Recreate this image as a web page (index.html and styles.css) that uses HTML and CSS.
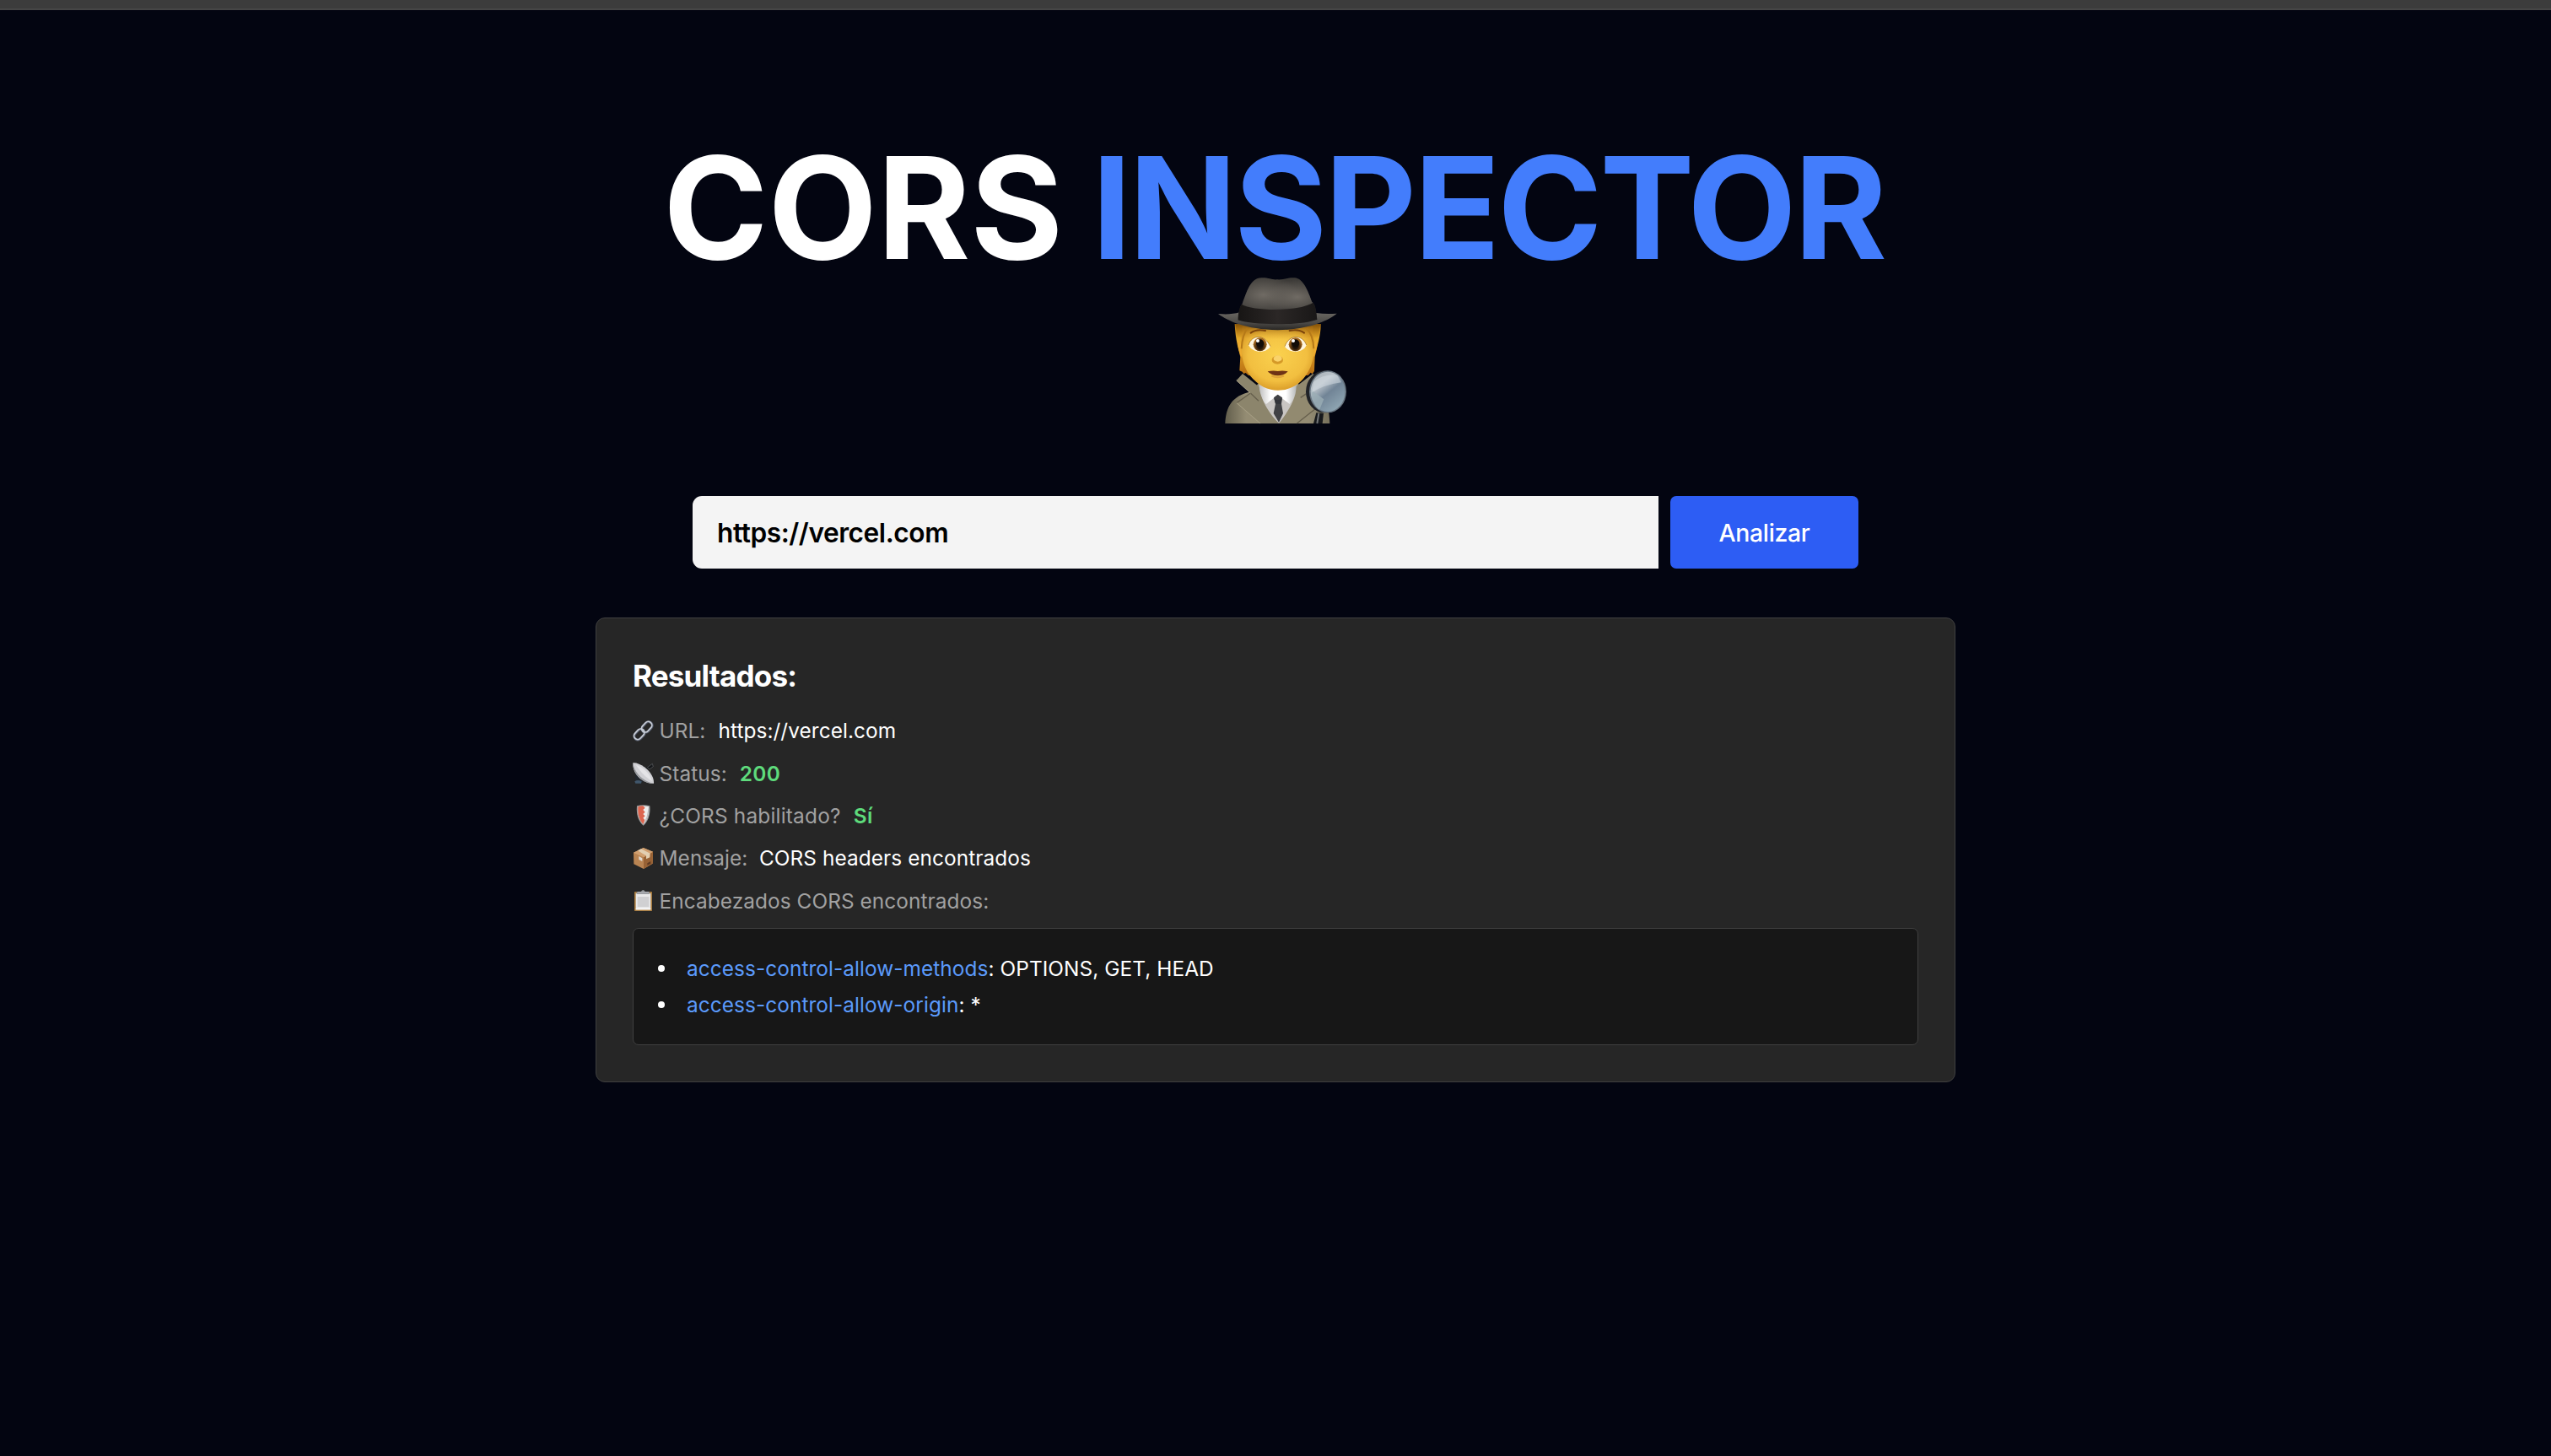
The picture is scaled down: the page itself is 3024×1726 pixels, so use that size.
FILE: index.html
```html
<!DOCTYPE html>
<html lang="es">
<head>
<meta charset="utf-8">
<title>CORS Inspector</title>
<link rel="stylesheet" href="styles.css">
</head>
<body>
<div class="topbar"></div>
<main class="page">
  <h1 class="title">
    <span class="title-text">CORS <span class="accent">INSPECTOR</span></span>
    <svg class="detective" viewBox="6 66 540 519" aria-hidden="true">
      <defs>
        <radialGradient id="crownL" cx=".32" cy=".4" r=".45"><stop offset="0" stop-color="#706b64"/><stop offset="1" stop-color="#706b64" stop-opacity="0"/></radialGradient>
        <radialGradient id="crownR" cx=".75" cy=".45" r=".4"><stop offset="0" stop-color="#706b64"/><stop offset="1" stop-color="#706b64" stop-opacity="0"/></radialGradient>
        <linearGradient id="brim" x2="0" y2="1"><stop offset="0" stop-color="#6a6762"/><stop offset=".6" stop-color="#4b4946"/><stop offset="1" stop-color="#282624"/></linearGradient>
        <linearGradient id="band" x2="1" y2="0"><stop offset="0" stop-color="#171514"/><stop offset=".5" stop-color="#2b2726"/><stop offset="1" stop-color="#191717"/></linearGradient>
        <radialGradient id="skin" cx=".5" cy=".45" r=".62"><stop offset="0" stop-color="#fad14e"/><stop offset=".65" stop-color="#f2bf40"/><stop offset="1" stop-color="#d18f1e"/></radialGradient>
        <linearGradient id="hair" x2="0" y2="1"><stop offset="0" stop-color="#b0720e"/><stop offset=".3" stop-color="#e7ad2c"/><stop offset="1" stop-color="#b86e12"/></linearGradient>
        <linearGradient id="shade" x2="0" y2="1"><stop offset="0" stop-color="#7c4b06" stop-opacity=".85"/><stop offset="1" stop-color="#c98a1c" stop-opacity="0"/></linearGradient>
        <linearGradient id="coat" x2="1" y2="0"><stop offset="0" stop-color="#625e4c"/><stop offset=".2" stop-color="#948c73"/><stop offset=".8" stop-color="#948c73"/><stop offset="1" stop-color="#77715c"/></linearGradient>
        <linearGradient id="shirt" x2="1" y2="0"><stop offset="0" stop-color="#bdbdbd"/><stop offset=".3" stop-color="#fff"/><stop offset=".7" stop-color="#fff"/><stop offset="1" stop-color="#aeb0b0"/></linearGradient>
        <linearGradient id="lens" x2=".7" y2="1"><stop offset="0" stop-color="#a5adb3"/><stop offset=".35" stop-color="#bac3ca"/><stop offset=".6" stop-color="#718496"/><stop offset="1" stop-color="#8fa6b3"/></linearGradient>
        <radialGradient id="iris" cy=".65"><stop offset=".35" stop-color="#21140a"/><stop offset="1" stop-color="#a2651c"/></radialGradient>
      </defs>
      <path d="M131 222C132 250 136 276 141 300L151 340 148 388 158 392 163 399 170 396 180 405 392 405 401 395 407 400 414 390 416 340C424 300 438 262 437 222Z" fill="url(#hair)"/>
      <path d="M97 576C100 520 118 478 190 463L218 430 355 430 372 463 440 475C462 500 468 540 469 576Z" fill="url(#coat)"/>
      <path d="M222 455L284 492 350 450 345 520 288 576 236 525Z" fill="#c9c6c3"/>
      <path d="M217 432L217 455C224 482 234 500 243 507L284 474 326 507C342 490 352 462 354 430Z" fill="url(#shirt)"/>
      <path d="M270 484L284 473 300 484 297 506 303 540 288 572 269 540 276 506Z" fill="#404144"/>
      <path d="M271 486Q284 500 299 486L296 506 276 506Z" fill="#33353a"/>
      <path d="M159 399L218 446C222 492 260 548 288 575L222 576 138 503 187 468 137 423Z" fill="#8c856c"/>
      <path d="M187 468L216 496M138 503L187 468" fill="none" stroke="#665f4c" stroke-width="4"/>
      <path d="M410 398L350 444C350 494 310 548 288 575L350 576 440 506 386 470 420 425Z" fill="#928a70"/>
      <path d="M386 470L365 484M440 506L352 576" fill="none" stroke="#665f4c" stroke-width="4"/>
      <path d="M138 503L222 576M137 423L187 468" fill="none" stroke="#aaa287" stroke-width="3"/>
      <path d="M158 230C150 300 152 362 184 404C216 443 250 458 285 458C330 458 366 436 390 396C418 350 415 300 409 230Z" fill="url(#skin)"/>
      <path d="M141 282Q150 275 154 300L157 343Q142 320 141 282M426 282Q416 275 413 300L410 343Q423 320 426 282" fill="#edac30"/>
      <path d="M133 222H436L428 268Q284 286 140 268Z" fill="url(#shade)"/>
      <path d="M176 238Q158 260 155 310M386 238Q410 260 412 310" fill="none" stroke="#b57918" stroke-width="6"/>
      <path d="M188 254Q208 239 240 246M326 246Q358 239 378 254" fill="none" stroke="#7b430b" stroke-width="6" stroke-linecap="round"/>
      <path d="M180 297C192 258 238 258 258 302C240 329 194 326 180 297M309 302C324 258 372 258 386 297C376 326 326 329 309 302" fill="#fff6df"/>
      <circle cx="221" cy="295" r="24" fill="url(#iris)"/><circle cx="347" cy="295" r="24" fill="url(#iris)"/>
      <circle cx="221" cy="291" r="14" fill="#120c08"/><circle cx="347" cy="291" r="14" fill="#120c08"/>
      <circle cx="213" cy="282" r="6" fill="#fff"/><circle cx="339" cy="282" r="6" fill="#fff"/>
      <path d="M180 297C192 258 238 258 258 302M309 302C324 258 372 258 386 297" fill="none" stroke="#9a6514" stroke-width="2"/>
      <ellipse cx="283" cy="350" rx="20" ry="15" fill="#d59927"/><ellipse cx="284" cy="345" rx="15" ry="11" fill="#fad36b"/>
      <path d="M248 391Q268 386 284 390Q302 386 320 391Q306 406 284 406Q262 406 248 391Z" fill="#6f3315"/>
      <path d="M262 407Q284 417 306 407" fill="none" stroke="#dfa23a" stroke-width="6"/>
      <path d="M72 186C96 188 126 188 148 181L420 183C446 187 470 187 494 185C462 210 400 241 284 244C168 241 108 212 72 186Z" fill="url(#brim)"/>
      <path d="M143 210C145 184 148 164 158 150C174 110 186 58 226 58C252 57 264 66 282 64C302 66 316 57 344 58C376 60 392 108 406 144C416 150 420 176 424 208Z" fill="#3d3b38"/>
      <path d="M143 210C145 184 148 164 158 150C174 110 186 58 226 58C252 57 264 66 282 64C302 66 316 57 344 58C376 60 392 108 406 144C416 150 420 176 424 208Z" fill="url(#crownL)"/>
      <path d="M143 210C145 184 148 164 158 150C174 110 186 58 226 58C252 57 264 66 282 64C302 66 316 57 344 58C376 60 392 108 406 144C416 150 420 176 424 208Z" fill="url(#crownR)"/>
      <path d="M143 208C143 184 147 164 155 152C200 178 360 178 410 146C419 156 422 182 424 206C370 228 200 228 143 208Z" fill="url(#band)"/>
      <path d="M421 538L447 540 443 576 411 576Z" fill="#17191c"/><path d="M430 540L424 576" stroke="#737679" stroke-width="6"/>
      <ellipse cx="450" cy="463" rx="66" ry="75" fill="#202226"/>
      <ellipse cx="462" cy="463" rx="66" ry="75" fill="#687580"/>
      <ellipse cx="462" cy="463" rx="61" ry="71" fill="url(#lens)"/>
      <path d="M403 456L448 490 432 528Q402 505 403 456" fill="#9baeb5" opacity=".8"/>
      <path d="M412 428Q442 400 495 404L510 430Q450 438 405 466Z" fill="#d8dfe5" opacity=".5"/>
    </svg>
  </h1>
  <form class="search">
    <div class="field">https://vercel.com</div>
    <button class="submit" type="button">Analizar</button>
  </form>
  <section class="card">
    <h2 class="card-title">Resultados:</h2>
    <div class="row">
      <svg class="icon" viewBox="0 0 75 75"><g fill="none"><g stroke="#596070" stroke-width="9"><rect x="-13" y="-21" width="26" height="42" rx="13" transform="translate(51 24) rotate(43)"/><rect x="-13" y="-21" width="26" height="42" rx="13" transform="translate(24 50) rotate(43)"/></g><g stroke="#c7ccd5" stroke-width="5"><rect x="-13" y="-21" width="26" height="42" rx="13" transform="translate(50 23) rotate(43)"/><rect x="-13" y="-21" width="26" height="42" rx="13" transform="translate(23 49) rotate(43)"/></g></g></svg>
      <span class="label">URL:</span><span class="value">https://vercel.com</span>
    </div>
    <div class="row">
      <svg class="icon" viewBox="0 0 75 75"><path d="M11 34L8 64 32 72 45 60 30 40Z" fill="#22272d"/><path d="M7 67Q18 59 32 67L30 74H10Z" fill="#40566b"/><path d="M46 23L64 10" stroke="#15171a" stroke-width="5"/><path d="M52 17L70 4 73 14 60 24Z" fill="#15171a" stroke="#63666a" stroke-width="2"/><path d="M1 1C28 -2 78 36 75 74C44 78 -2 46 1 1Z" fill="#d0d0d4"/><path d="M1 1C6 38 40 68 75 74C44 78 -1 46 1 1Z" fill="#97999d"/><path d="M12 8C36 15 62 40 69 66C50 55 28 35 12 8Z" fill="#e4e4e7"/></svg>
      <span class="label">Status:</span><span class="value ok">200</span>
    </div>
    <div class="row">
      <svg class="icon" viewBox="0 0 75 75"><path d="M15 4Q38 -3 61 4C64 34 55 60 38 74C20 60 12 34 15 4Z" fill="#9a9b9c"/><path d="M19 7Q38 2 57 7C59 34 52 56 38 69C24 56 17 34 19 7Z" fill="#eeeeed"/><path d="M19 7Q29 3 37 4L44 11 37 18 44 26 37 33 44 40 37 47 43 54 38 69C24 56 17 34 19 7Z" fill="#dc654f"/><path d="M57 7C59 34 52 56 38 69L50 42Z" fill="#b9babc"/></svg>
      <span class="label cors">¿CORS habilitado?</span><span class="value ok">Sí</span>
    </div>
    <div class="row">
      <svg class="icon" viewBox="0 0 75 75"><path d="M3 17L38 0 72 14 71 56 39 75 4 58Z" fill="#b98452"/><path d="M39 34L72 14 71 56 39 75Z" fill="#986235"/><path d="M3 17L38 0 72 14 39 34Z" fill="#d1a071"/><path d="M18 10L30 4 62 20 61 34 48 40 48 28Z" fill="#e2cfb2"/><path d="M22 30L34 37V48L22 42Z" fill="#dfd9d2"/><path d="M52 55L64 48V56L52 62Z" fill="#603b22"/></svg>
      <span class="label">Mensaje:</span><span class="value message">CORS headers encontrados</span>
    </div>
    <div class="row">
      <svg class="icon" viewBox="0 0 75 75"><rect x="6" y="6" width="63" height="69" rx="2" fill="#a77b3f"/><path d="M11 12H64V70H11Z" fill="#e9e9ea"/><path d="M17 24H58V60H17Z" fill="#d0d0d2"/><path d="M11 66H64V70H11Z" fill="#fff"/><path d="M14 6H30Q32 0 37 0T44 6H60V14H14Z" fill="#8b8e92"/><path d="M17 8H57" stroke="#c4c7ca" stroke-width="3"/></svg>
      <span class="label">Encabezados CORS encontrados:</span>
    </div>
    <ul class="headers">
      <li><span class="key">access-control-allow-methods</span>: OPTIONS, GET, HEAD</li>
      <li><span class="key">access-control-allow-origin</span>: *</li>
    </ul>
  </section>
</main>
</body>
</html>
```
FILE: styles.css
```css
* { box-sizing: border-box; }
body {
  margin: 0;
  min-height: 1726px;
  background: #030511;
  color: #fff;
  font-family: Inter, "Liberation Sans", sans-serif;
  font-size: 24.4px;
  letter-spacing: 0.07px;
}
.topbar { height: 12px; background: #3c3c3c; border-bottom: 2px solid #464646; }
.page { width: 1612px; margin: 0 auto; padding-top: 148px; }
.title {
  display: flex;
  flex-direction: column;
  align-items: center;
  margin: 0;
  font-size: 168px;
  line-height: 173px;
  font-weight: 700;
  letter-spacing: 0;
  white-space: nowrap;
}
.accent { margin: 0 3.6px 0 -6px; color: #437dfc; letter-spacing: -3px; }
.detective { display: block; width: 180px; height: 173px; margin-top: -1px; overflow: visible; }
.search { display: flex; gap: 14px; width: 1382px; height: 86px; margin: 83px auto 58px; }
.field {
  flex: 1;
  display: flex;
  align-items: center;
  padding: 0 29px;
  background: #f4f4f4;
  border-radius: 11px 0 0 11px;
  color: #000;
  font-size: 31.6px;
  font-weight: 600;
  letter-spacing: -0.42px;
}
.submit {
  width: 223px;
  padding: 0;
  border: 0;
  border-radius: 7px;
  background: #2d5df4;
  color: #fff;
  font-family: inherit;
  font-size: 28.4px;
  font-weight: 500;
  letter-spacing: -0.35px;
}
.card {
  height: 551px;
  padding: 43px;
  border: 1px solid #404040;
  border-radius: 11px;
  background: #262626;
}
.card-title { margin: 0 0 15px; font-size: 35px; line-height: 50px; font-weight: 700; letter-spacing: -0.8px; }
.row { display: flex; align-items: center; height: 50.4px; white-space: pre; }
.icon { width: 25px; height: 25px; margin-right: 6.5px; overflow: visible; }
.label { color: #a1a1a1; }
.cors { letter-spacing: 0.2px; }
.value { margin-left: 15px; }
.message { margin-left: 13.5px; }
.ok { color: #5edb7c; font-weight: 600; letter-spacing: 0.4px; }
.headers {
  height: 139px;
  margin: 7px 0 0;
  padding: 26px 0 0 29px;
  border: 1px solid #404040;
  border-radius: 7px;
  background: #171717;
  line-height: 43px;
  list-style: none;
}
.headers li { display: flex; align-items: center; white-space: pre; }
.headers li::before {
  content: "";
  width: 8px;
  height: 8px;
  margin-right: 26px;
  border-radius: 50%;
  background: #fff;
}
.key { color: #5b9afb; }
```
